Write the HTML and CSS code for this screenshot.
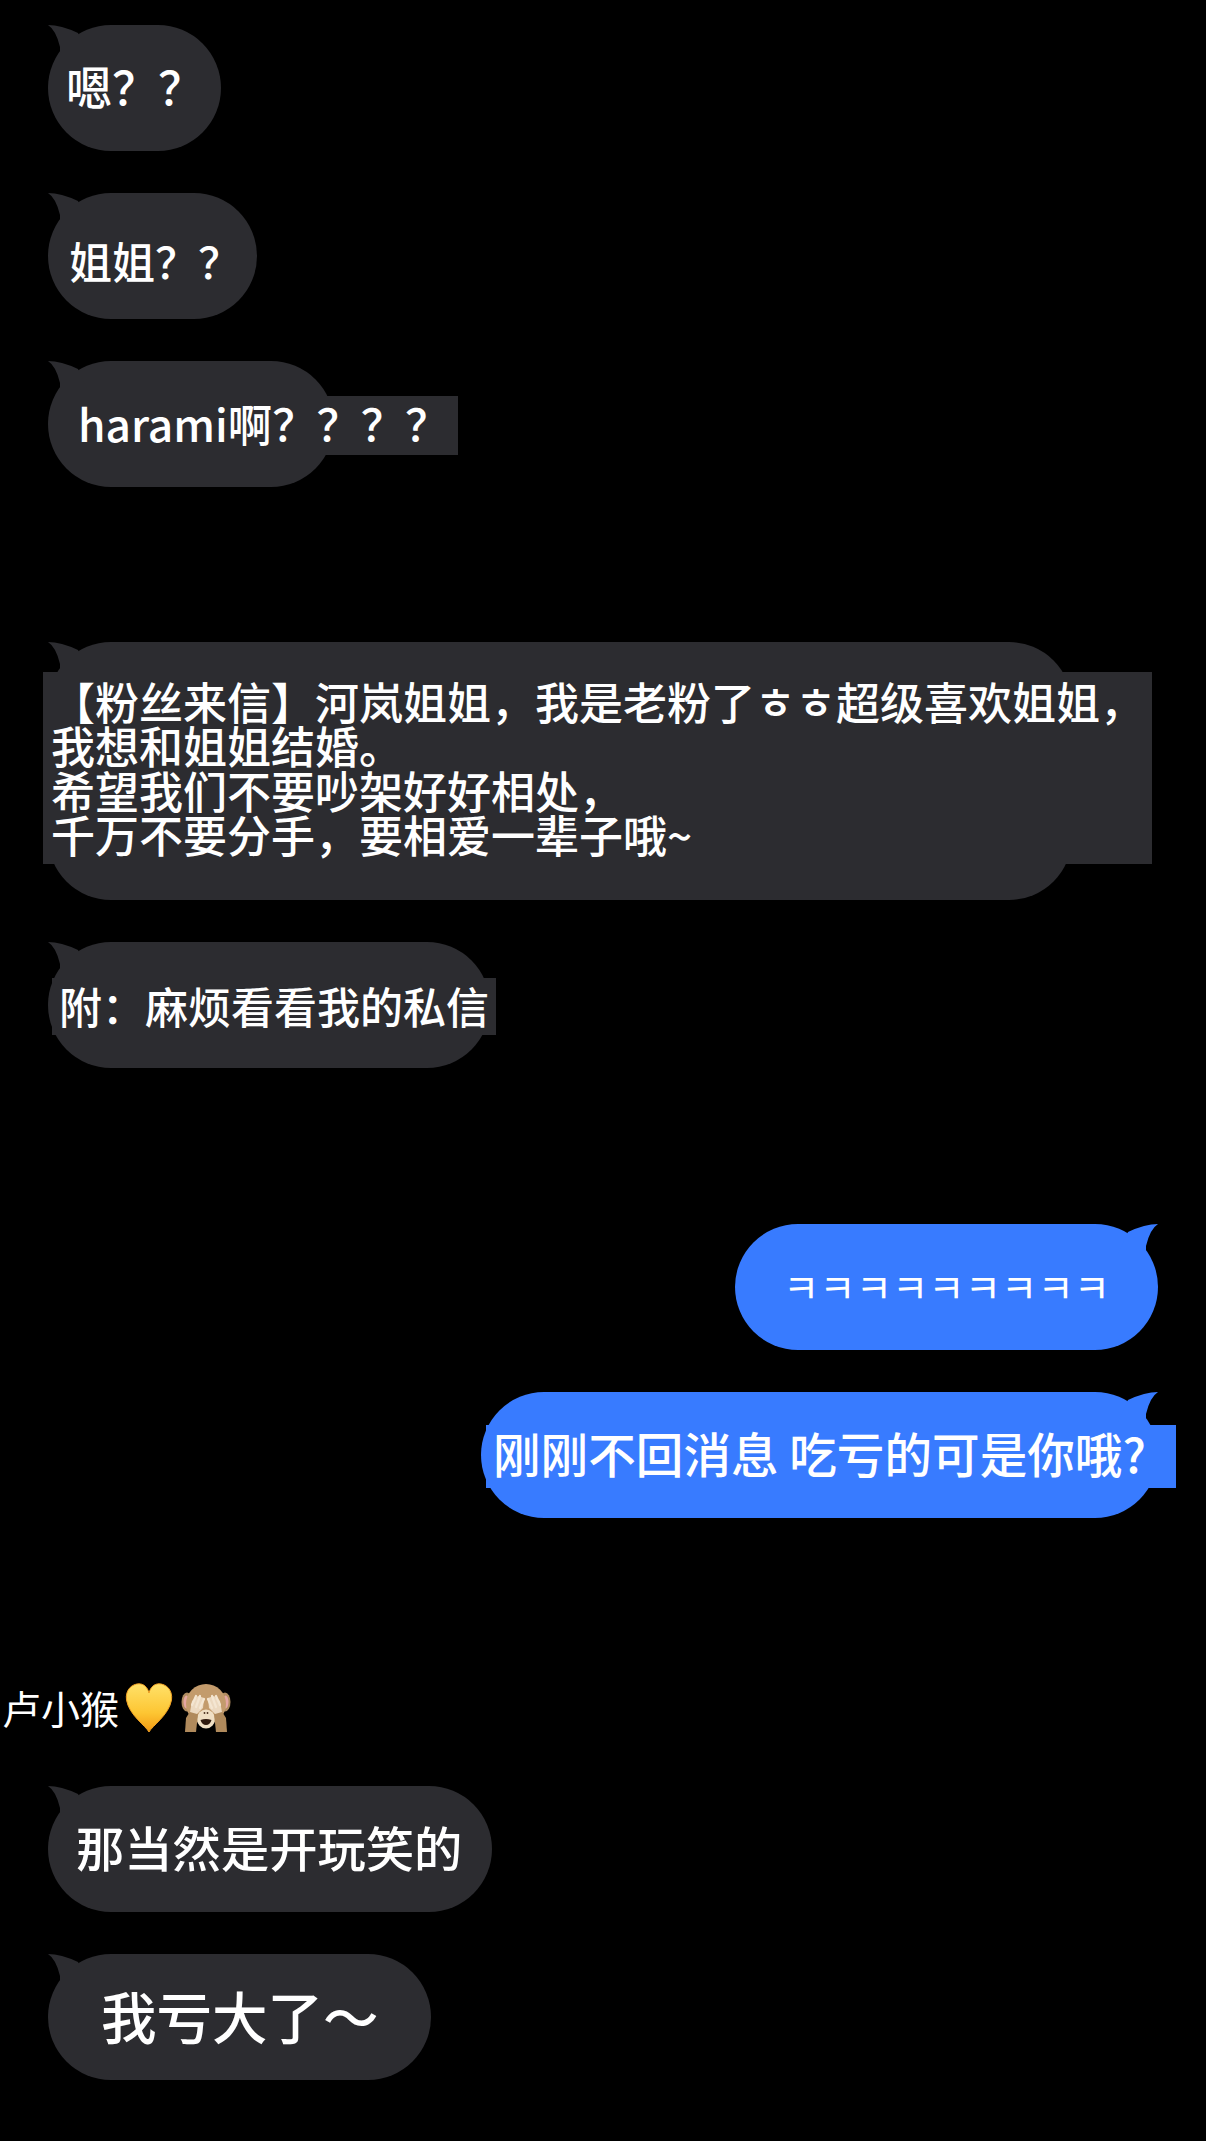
FILE: index.html
```html
<!DOCTYPE html>
<html lang="zh-CN">
<head>
  <meta charset="UTF-8" />
  <title>聊天记录</title>
  <link rel="stylesheet" href="styles.css">
</head>
<body>
  <svg class="defs" width="0" height="0" aria-hidden="true">
    <defs>
      <path id="tail" d="M0 0Q13 0 30 8L40 30L12 30L12 22Q8 5 0 0Z" />
      <linearGradient id="heartFill" x1="0" y1="0" x2="0" y2="1">
        <stop offset="0" stop-color="#ffe169" />
        <stop offset="0.6" stop-color="#fdc633" />
        <stop offset="1" stop-color="#f39a12" />
      </linearGradient>
    </defs>
  </svg>

  <!-- Incoming: first block -->
  <div class="group">
    <div class="bubble bubble-1">
      <svg class="tail" viewBox="0 0 40 30"><use href="#tail" /></svg>
      <span class="msg msg-1">嗯？？</span>
    </div>
    <div class="bubble bubble-2">
      <svg class="tail" viewBox="0 0 40 30"><use href="#tail" /></svg>
      <span class="msg msg-2">姐姐？？</span>
    </div>
    <div class="bubble bubble-3">
      <svg class="tail" viewBox="0 0 40 30"><use href="#tail" /></svg>
      <span class="msg msg-3">harami啊？？？？</span>
    </div>
  </div>

  <!-- Incoming: fan letter -->
  <div class="group group-gap">
    <div class="bubble bubble-4">
      <svg class="tail" viewBox="0 0 40 30"><use href="#tail" /></svg>
      <span class="msg msg-4">【粉丝来信】河岚姐姐，我是老粉了ㅎㅎ超级喜欢姐姐，<br>我想和姐姐结婚。<br>希望我们不要吵架好好相处，<br>千万不要分手，要相爱一辈子哦~</span>
    </div>
    <div class="bubble bubble-5">
      <svg class="tail" viewBox="0 0 40 30"><use href="#tail" /></svg>
      <span class="msg msg-5">附：麻烦看看我的私信</span>
    </div>
  </div>

  <!-- Outgoing -->
  <div class="group group-out">
    <div class="bubble bubble-out bubble-6">
      <svg class="tail tail-out" viewBox="0 0 40 30"><use href="#tail" /></svg>
      <span class="msg msg-6">ㅋㅋㅋㅋㅋㅋㅋㅋㅋ</span>
    </div>
    <div class="bubble bubble-out bubble-7">
      <svg class="tail tail-out" viewBox="0 0 40 30"><use href="#tail" /></svg>
      <span class="msg msg-7">刚刚不回消息 吃亏的可是你哦?</span>
    </div>
  </div>

  <!-- Sender name with emoji -->
  <div class="sender">
    <span class="sender-name">卢小猴</span>
    <svg class="emoji-heart" viewBox="0 0 48 50">
      <path d="M24 49C21 43 4 32 1.500 17C0 7 7 .8 14 .8C18.500 .8 22.500 4 24 10C25.500 4 29.500 .8 34 .8C41 .8 48 7 46.500 17C44 32 27 43 24 49Z" fill="url(#heartFill)" stroke="#f0a024" stroke-width="1" />
    </svg>
    <svg class="emoji-monkey" viewBox="0 0 50 48">
      <!-- ears -->
      <ellipse cx="6" cy="18" rx="5.500" ry="9.500" fill="#b08c60" />
      <ellipse cx="44" cy="18" rx="5.500" ry="9.500" fill="#b08c60" />
      <ellipse cx="5.500" cy="18" rx="3" ry="6.500" fill="#e5a6a2" />
      <ellipse cx="44.500" cy="18" rx="3" ry="6.500" fill="#e5a6a2" />
      <!-- head and muzzle -->
      <ellipse cx="25" cy="20" rx="20" ry="20" fill="#c39b6c" />
      <ellipse cx="25" cy="35" rx="9" ry="9.500" fill="#efdfc4" />
      <circle cx="23.500" cy="29" r=".9" fill="#4a3020" />
      <circle cx="26.500" cy="29" r=".9" fill="#4a3020" />
      <path d="M19.500 36Q25 34 30.500 36Q29 41 25 41Q21 41 19.500 36Z" fill="#2f1a0e" />
      <!-- arms -->
      <path d="M4 48L5 34L10 26L17 30L15 48Z" fill="#b08a5c" />
      <path d="M46 48L45 34L40 26L33 30L35 48Z" fill="#b08a5c" />
      <!-- hands over the eyes -->
      <path d="M9 28L11 17L17 12L23 14L22 24L16 30Z" fill="#ecd9c0" />
      <path d="M41 28L39 17L33 12L27 14L28 24L34 30Z" fill="#ecd9c0" />
      <path class="fingers" d="M11 21L15 12M15 23L19 12M19 24L23 15" />
      <path class="fingers" d="M39 21L35 12M35 23L31 12M31 24L27 15" />
    </svg>
  </div>

  <div class="group group-last">
    <div class="bubble bubble-8">
      <svg class="tail" viewBox="0 0 40 30"><use href="#tail" /></svg>
      <span class="msg msg-8">那当然是开玩笑的</span>
    </div>
    <div class="bubble bubble-9">
      <svg class="tail" viewBox="0 0 40 30"><use href="#tail" /></svg>
      <span class="msg msg-9">我亏大了～</span>
    </div>
  </div>
</body>
</html>
```

FILE: styles.css
```css
/* ---------- Global ---------- */
* {
  box-sizing: border-box;
}
body {
  margin: 0;
  padding: 25px 48px 61px;
  background: #000;
  color: #fff;
  font-family: "Noto Sans CJK SC", "Noto Sans", sans-serif;
  font-weight: 500;
  overflow-x: hidden;
}
.defs {
  position: absolute;
}

/* ---------- Groups ---------- */
.group {
  display: flex;
  flex-direction: column;
  align-items: flex-start;
  gap: 42px;
}
.group-gap {
  margin-top: 155px;
}
.group-out {
  align-items: flex-end;
  margin-top: 156px;
}
.group-last {
  margin-top: 54px;
}

/* ---------- Bubbles ---------- */
.bubble {
  position: relative;
  display: flex;
  align-items: center;
  height: 126px;
  border-radius: 63px;
  background: #2c2c30;
}
.bubble-out {
  background: #387bff;
}
.tail {
  position: absolute;
  left: 0;
  top: 0;
  width: 40px;
  height: 30px;
  fill: #2c2c30;
}
.tail-out {
  left: auto;
  right: 0;
  transform: scaleX(-1);
  fill: #387bff;
}

.bubble-1 { width: 173px; }
.bubble-2 { width: 209px; }
.bubble-3 { width: 286px; }
.bubble-4 { width: 1024px; height: 258px; }
.bubble-5 { width: 442px; }
.bubble-6 { width: 423px; }
.bubble-7 { width: 677px; }
.bubble-8 { width: 444px; }
.bubble-9 { width: 383px; }

/* ---------- Message text ---------- */
.msg {
  position: relative;
  flex: none;
  white-space: nowrap;
  background: inherit;
}
.msg-1 {
  margin: -6px 0 0 18px;
  font-size: 46px;
  line-height: 59px;
}
.msg-2 {
  margin: 8px 0 0 21px;
  font-size: 43px;
  line-height: 59px;
}
.msg-3 {
  margin: 3px 0 0 30px;
  padding: 0 9px 4px 0;
  font-size: 44.300px;
  line-height: 55px;
}
.msg-4 {
  margin: -7px 0 0 -5px;
  padding: 7px 8px 7px 8px;
  font-size: 44px;
  line-height: 44.500px;
}
.msg-5 {
  margin: 3px 0 0 4px;
  padding: 0 7px 2px;
  font-size: 43px;
  line-height: 55px;
}
.msg-6 {
  margin: -3px 0 0 48px;
  font-size: 39.500px;
  font-weight: 400;
  line-height: 59px;
}
.msg-7 {
  margin: 2px 0 0 5px;
  padding: 0 30px 8px 7px;
  font-size: 47.600px;
  line-height: 55px;
}
.msg-8 {
  margin: -6px 0 0 28px;
  font-size: 48.300px;
  line-height: 59px;
}
.msg-9 {
  margin: -4px 0 0 53px;
  font-size: 55.500px;
  line-height: 59px;
}

/* ---------- Sender row ---------- */
.sender {
  display: flex;
  align-items: center;
  margin: 165px 0 0 -48px;
  height: 49px;
}
.sender-name {
  font-size: 39px;
  font-weight: 400;
  line-height: 49px;
  padding-left: 2px;
}
.emoji-heart {
  width: 48px;
  height: 50px;
  margin-left: 6px;
}
.emoji-monkey {
  width: 50px;
  height: 48px;
  margin: 1px 0 0 8px;
}
.fingers {
  fill: none;
  stroke: #f4e6d2;
  stroke-width: 2.200;
  stroke-linecap: round;
}
```
